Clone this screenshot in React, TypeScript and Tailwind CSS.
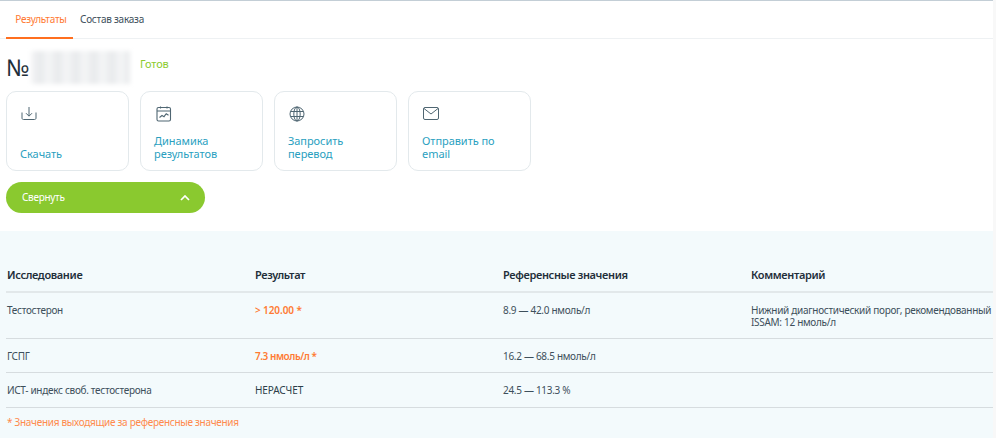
import React from "react";

const font = { fontFamily: '"Noto Sans", "Open Sans", sans-serif' };

function DownloadIcon() {
  return (
    <svg width="16" height="16" viewBox="0 0 16 16" fill="none" stroke="#4f6672" strokeWidth="1" className="ml-px">
      <path d="M8 1v9M5 7.200 8 10.200l3-3M1 6.500V12c0 1 .6 1.500 1.500 1.500h11c.9 0 1.500-.5 1.500-1.500V6.500" />
    </svg>
  );
}
function ChartIcon() {
  return (
    <svg width="16" height="16" viewBox="0 0 16 16" fill="none" stroke="#4f6672" strokeWidth="1.100" className="ml-[2px]">
      <rect x="1" y="1.500" width="13.500" height="13.500" rx="1.500" />
      <path d="M1 5h13.500M4.500.5v2M11 .5v2M3.500 11.500l2.500-2 2 1.200 2.200-3 2.300 1.600" />
    </svg>
  );
}
function GlobeIcon() {
  return (
    <svg width="16" height="16" viewBox="0 0 16 16" fill="none" stroke="#4f6672" strokeWidth="1" className="ml-px">
      <circle cx="8" cy="8" r="7" />
      <ellipse cx="8" cy="8" rx="3.200" ry="7" />
      <path d="M1.500 5.500h13M1.500 10.500h13M8 1v14" />
    </svg>
  );
}
function MailIcon() {
  return (
    <svg width="16" height="13" viewBox="0 0 16 13" fill="none" stroke="#4f6672" strokeWidth="1" className="ml-px mt-px">
      <rect x="0.500" y="0.500" width="15" height="12" rx="1.500" />
      <path d="M1 1.500 8 7l7-5.500" />
    </svg>
  );
}

function Card({ icon, label }: { icon: React.ReactNode; label: React.ReactNode }) {
  return (
    <div className="w-[123px] h-[80px] rounded-[10px] border border-[#e3e9ec] bg-white flex flex-col justify-between pl-[13px] pr-2 pt-[14px] pb-[10px]">
      <div className="h-4 flex items-start">{icon}</div>
      <div className="text-[11px] leading-[13px] tracking-[-0.05px] text-[#2a9fbf]">{label}</div>
    </div>
  );
}

const rows = [
  { name: "Тестостерон", res: "> 120.00 *", hi: true, ref: "8.9 — 42.0 нмоль/л", c: ["Нижний диагностический порог, рекомендованный", "ISSAM: 12 нмоль/л"], h: "h-[46px] pt-[11px]", tr: "tracking-[-0.1px]" },
  { name: "ГСПГ", res: "7.3 нмоль/л *", hi: true, ref: "16.2 — 68.5 нмоль/л", c: [], h: "h-[34px] items-center", tr: "tracking-[-0.45px]" },
  { name: "ИСТ- индекс своб. тестостерона", res: "НЕРАСЧЕТ", hi: false, ref: "24.5 — 113.3 %", c: [], h: "h-[35px] items-center", tr: "tracking-[-0.1px]" },
];

export default function App() {
  return (
    <div className="w-[996px] h-[438px] bg-[#f8f8f8] overflow-hidden" style={font}>
      <div className="w-[993px] h-full bg-white text-[#2c3e4a]">
        <div className="h-px bg-[#c3ced6]" />
        <div className="h-[38px] border-b border-[#eef1f3] flex pl-[6px] text-[10px] tracking-[-0.25px]">
          <div className="w-[67px] h-[38px] border-b-2 border-[#ff6f1f] flex items-center justify-center pl-[3px] text-[#ff7a33]">Результаты</div>
          <div className="ml-[7px] flex items-center text-[#3d4f5b]">Состав заказа</div>
        </div>
        <div className="pl-[6px]">
          <div className="relative h-[52px] flex items-center">
            <span className="text-[23px] leading-none text-[#1f2f3a] mt-[5px]">№</span>
            <span className="absolute left-[25px] top-[12px] w-[99px] h-[33px] blur-[2px] bg-[repeating-linear-gradient(90deg,#f4f5f6_0px,#e8eaec_9px,#f5f6f7_18px)]" />
            <span className="absolute left-[134px] top-[17px] text-[11px] tracking-[-0.15px] text-[#8ccb2f]">Готов</span>
          </div>
          <div className="flex gap-[11px]">
            <Card icon={<DownloadIcon />} label="Скачать" />
            <Card icon={<ChartIcon />} label={<>Динамика<br />результатов</>} />
            <Card icon={<GlobeIcon />} label={<>Запросить<br />перевод</>} />
            <Card icon={<MailIcon />} label={<>Отправить по<br />email</>} />
          </div>
          <div className="mt-[11px] w-[199px] h-[31px] rounded-full bg-[#8ac92f] flex items-center justify-between pl-[16px] pr-[15px] text-[10px] tracking-[-0.3px] text-white">
            <span>Свернуть</span>
            <svg width="10" height="6" viewBox="0 0 10 6" fill="none" stroke="white" strokeWidth="1.700"><path d="M1 5l4-4 4 4" /></svg>
          </div>
        </div>
        <div className="mt-[18px] h-[207px] bg-[#f3fafc] pl-[6px]">
          <div className="grid grid-cols-[248px_248px_248px_1fr] pl-px h-[62px] items-end pb-[8px] border-b-2 border-[#e2e8ea] text-[11px] font-semibold tracking-[-0.35px] text-[#1f2f3a]">
            <div>Исследование</div><div>Результат</div><div>Референсные значения</div><div>Комментарий</div>
          </div>
          {rows.map((r) => (
            <div key={r.name} className={`grid grid-cols-[248px_248px_248px_1fr] pl-px border-b border-[#d6dcdf] text-[10px] leading-[12px] tracking-[-0.3px] text-[#3d4f5b] ${r.h}`}>
              <div>{r.name}</div>
              <div className={`${r.tr} ${r.hi ? "font-semibold text-[#ff7a33]" : "text-[#2c3e4a]"}`}>{r.res}</div>
              <div>{r.ref}</div>
              <div>{r.c.map((t) => <div key={t} className="whitespace-nowrap">{t}</div>)}</div>
            </div>
          ))}
          <div className="mt-[8px] pl-px text-[10px] leading-[12px] tracking-[-0.3px] text-[#ff8a4d]">* Значения выходящие за референсные значения</div>
        </div>
      </div>
    </div>
  );
}
